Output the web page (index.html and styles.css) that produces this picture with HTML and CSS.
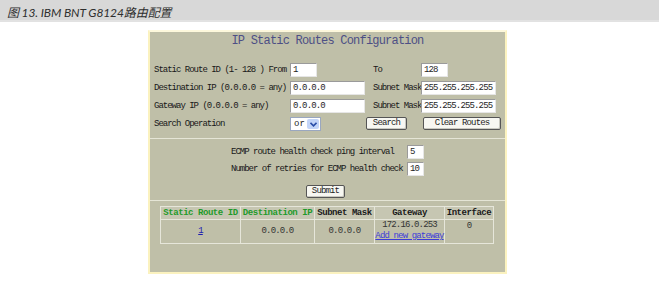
FILE: index.html
```html
<!DOCTYPE html>
<html lang="zh">
<head>
    <meta charset="UTF-8">
    <title>IP Static Routes Configuration</title>
    <link rel="stylesheet" href="styles.css">
</head>
<body>
    <!-- Figure caption -->
    <div class="caption">图 13. IBM BNT G8124路由配置</div>

    <!-- Config panel -->
    <div class="panel">
        <div class="title">IP Static Routes Configuration</div>

        <div class="search-form">
            <span class="lbl">Static Route ID (1- 128 ) From</span>
            <span class="field short">1</span>
            <span class="lbl lbl-right">To</span>
            <span class="field short">128</span>

            <span class="lbl">Destination IP (0.0.0.0 = any)</span>
            <span class="field">0.0.0.0</span>
            <span class="lbl lbl-right">Subnet Mask</span>
            <span class="field">255.255.255.255</span>

            <span class="lbl">Gateway IP (0.0.0.0 = any)</span>
            <span class="field">0.0.0.0</span>
            <span class="lbl lbl-right">Subnet Mask</span>
            <span class="field">255.255.255.255</span>

            <span class="lbl">Search Operation</span>
            <span class="select">
                <span class="select-val">or</span>
                <span class="select-btn">
                    <svg width="7" height="5" viewBox="0 0 7 5"><path d="M0.5 0.8 L3.5 3.8 L6.5 0.8" fill="none" stroke="#2a4ea8" stroke-width="1.6"/></svg>
                </span>
            </span>
            <span class="btn btn-search">Search</span>
            <span class="btn btn-clear">Clear Routes</span>
        </div>

        <div class="divider"></div>

        <div class="ecmp">
            <span class="lbl">ECMP route health check ping interval</span>
            <span class="field tiny">5</span>
            <span class="lbl">Number of retries for ECMP health check</span>
            <span class="field tiny">10</span>
        </div>
        <div class="submit-row">
            <span class="btn btn-submit">Submit</span>
        </div>

        <div class="divider"></div>

        <table class="routes">
            <tr>
                <th class="green">Static Route ID</th>
                <th class="green">Destination IP</th>
                <th>Subnet Mask</th>
                <th>Gateway</th>
                <th>Interface</th>
            </tr>
            <tr>
                <td><a href="#">1</a></td>
                <td>0.0.0.0</td>
                <td>0.0.0.0</td>
                <td class="gw">172.16.0.253<br><a href="#" class="add-gw">Add new gateway</a></td>
                <td class="top">0</td>
            </tr>
        </table>
    </div>
</body>
</html>
```

FILE: styles.css
```css
* {
    box-sizing: border-box;
}

body {
    margin: 0;
    background: #fff;
    width: 659px;
    height: 281px;
    overflow: hidden;
    font-family: "Liberation Mono", "DejaVu Sans Mono", monospace;
    color: #1e1e1e;
}

/* Caption bar */
.caption {
    height: 22px;
    background: #d8d8d8;
    border-bottom: 2px solid #e2e2e2;
    padding: 3px 0 0 7px;
    font-family: Lato, "Noto Sans CJK SC", sans-serif;
    font-style: italic;
    font-size: 12px;
    color: #2e2e2e;
    letter-spacing: -0.1px;
}

/* Panel */
.panel {
    width: 359px;
    height: 244px;
    margin: 8px 0 0 148px;
    background: #bfbfa8;
    border: 2px solid #fbf2bf;
    border-top-color: #fdf8dc;
    padding: 0 2px;
}

.title {
    text-align: center;
    font-size: 12px;
    letter-spacing: -0.8px;
    color: #4d4f85;
    line-height: 14px;
    padding-top: 2px;
}

.lbl {
    font-size: 9px;
    letter-spacing: -1px;
    white-space: nowrap;
    color: #181818;
}

/* Search form */
.search-form {
    margin-top: 15px;
    display: grid;
    grid-template-columns: 136px 80px 51px 80px;
    grid-auto-rows: 18px;
    align-items: start;
    padding-left: 2px;
}

.search-form .lbl {
    line-height: 14px;
}

.lbl-right {
    padding-left: 3px;
}

.field {
    display: block;
    height: 14px;
    width: 75px;
    background: #fff;
    border: 1px solid #9a9a9a;
    border-right-color: #e6e6e6;
    border-bottom-color: #e6e6e6;
    font-size: 9px;
    letter-spacing: -0.85px;
    line-height: 12px;
    padding-left: 2px;
}

.field.short {
    width: 27px;
}

.field.tiny {
    width: 17px;
}

.select {
    display: flex;
    width: 31px;
    height: 14px;
    background: #fff;
    border: 1px solid #9aa7c0;
    font-size: 9px;
    line-height: 12px;
}

.select-val {
    flex: 1;
    padding-left: 3px;
}

.select-btn {
    width: 12px;
    margin: 1px;
    background: #c3d5f8;
    border-radius: 2px;
    display: flex;
    align-items: center;
    justify-content: center;
}

.btn {
    display: inline-block;
    height: 13px;
    background: #f7f7f2;
    border: 1px solid #555;
    border-radius: 2px;
    font-size: 9px;
    letter-spacing: -0.85px;
    line-height: 11px;
    text-align: center;
    box-shadow: inset -1px -1px 0 #c9c9c0;
}

.btn-search {
    width: 41px;
    margin-left: -4px;
}

.btn-clear {
    width: 78px;
    margin-left: 2px;
}

.btn-submit {
    width: 39px;
}

.divider {
    height: 1px;
    background: #e5e5d6;
    margin: 0 -2px;
}

/* ECMP block */
.search-form + .divider {
    margin-top: 3px;
}

.ecmp {
    margin: 6px auto 0;
    width: 193px;
    display: grid;
    grid-template-columns: 176px 17px;
    grid-auto-rows: 17px;
}

.ecmp .lbl {
    line-height: 14px;
}

.submit-row {
    text-align: center;
    margin: 1px 0 0 -4px;
    height: 20px;
}

/* Routes table */
.routes {
    margin: 5px 0 0 8px;
    border-collapse: collapse;
    border: 1px solid #eeeee6;
    font-size: 9px;
}

.routes th,
.routes td {
    border: 1px solid #e6e6da;
    padding: 0;
    text-align: center;
    white-space: nowrap;
}

.routes th {
    height: 13px;
    font-weight: bold;
    letter-spacing: -0.45px;
    color: #1a1a1a;
    background: #c6c6b2;
}

.routes th.green {
    color: #1f9a2a;
}

.routes th:nth-child(1) { width: 80px; }
.routes th:nth-child(2) { width: 74px; }
.routes th:nth-child(3) { width: 60px; }
.routes th:nth-child(4) { width: 70px; }
.routes th:nth-child(5) { width: 49px; }

.routes td {
    height: 24px;
    letter-spacing: -0.85px;
    color: #333;
    line-height: 11px;
}

.routes td.top {
    vertical-align: top;
    padding-top: 1px;
}

.routes td.gw {
    vertical-align: top;
}

.routes a {
    color: #1d1db0;
}

.routes a.add-gw {
    color: #3c3cd8;
}
```
